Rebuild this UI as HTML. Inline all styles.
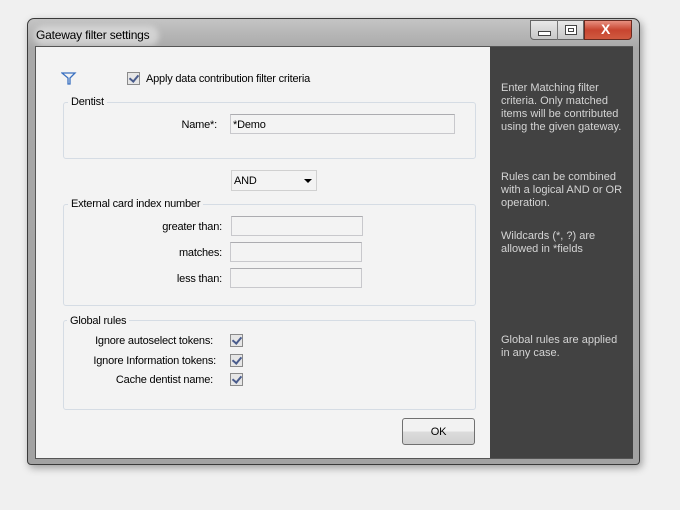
<!DOCTYPE html>
<html><head><style>
*{margin:0;padding:0;box-sizing:border-box}
body{width:680px;height:510px;background:#f0f0f0;position:relative;overflow:hidden;font-family:"Liberation Sans",sans-serif;font-size:11px;color:#000}
.a{position:absolute}
.t{font-size:11px;letter-spacing:-0.2px}
.win{left:27px;top:18px;width:613px;height:447px;border-radius:7px 7px 4px 4px;background:linear-gradient(#c4c4c4,#a8a8a8 30px,#a2a2a2);border:1px solid #3a3a3a;box-shadow:2px 3px 8px rgba(0,0,0,.35)}
.client{left:35px;top:46px;width:598px;height:413px;background:#f3f3f3;border:1px solid #555}
.dark{left:490px;top:47px;width:143px;height:411px;background:#424242}
.side{color:#d4d4d4;left:501px;line-height:13px}
.grp{border:1px solid #d5dce4;border-radius:3px}
.gl{background:#f3f3f3;padding:0 3px}
.inp{background:#f3f3f3;border:1px solid #c8c8cc;border-top-color:#acacb0}
.cb{width:13px;height:13px;border:1px solid #8a8a8a;background:#e6e6e6}
.cb:after{content:"";position:absolute;left:3px;top:0px;width:4px;height:7px;border:solid #4a5c8c;border-width:0 2px 2px 0;transform:rotate(40deg)}
.r{text-align:right}
</style></head><body>
<div class="a win"></div>
<div class="a" style="left:34px;top:26px;width:125px;height:20px;background:rgba(230,230,230,.6);border-radius:10px;filter:blur(3px)"></div>
<div class="a" style="left:36px;top:28px;font-size:12px;letter-spacing:-0.2px">Gateway filter settings</div>
<div class="a" style="left:530px;top:20px;width:54px;height:20px;border:1px solid #666;border-radius:0 0 0 4px;background:linear-gradient(#e8e8e8,#c8c8c8)"></div>
<div class="a" style="left:557px;top:20px;width:1px;height:20px;background:#777"></div>
<div class="a" style="left:538px;top:31px;width:13px;height:5px;border:1px solid #444;background:#fff"></div>
<div class="a" style="left:565px;top:25px;width:12px;height:10px;border:1px solid #444;background:#fff"></div>
<div class="a" style="left:568px;top:28px;width:6px;height:4px;border:1px solid #444"></div>
<div class="a" style="left:584px;top:20px;width:48px;height:20px;border:1px solid #6a2a20;border-radius:0 0 4px 0;background:linear-gradient(#e89080,#c84530 50%,#d05a40)"></div>
<div class="a" style="left:601px;top:21px;color:#fff;font-weight:bold;font-size:14px">X</div>
<div class="a client"></div>
<div class="a dark"></div>
<div class="a side" style="top:82px">Enter Matching filter<br>criteria. Only matched<br>items will be contributed<br>using the given gateway.</div>
<div class="a side" style="top:171px">Rules can be combined<br>with a logical AND or OR<br>operation.</div>
<div class="a side" style="top:230px">Wildcards (*, ?) are<br>allowed in *fields</div>
<div class="a side" style="top:334px">Global rules are applied<br>in any case.</div>

<svg class="a" style="left:61px;top:72px" width="16" height="14"><path d="M1 1H14L9 6V12H7V6Z" fill="none" stroke="#3a70c0" stroke-width="1.3"/></svg>
<div class="a cb" style="left:127px;top:72px"></div>
<div class="a t" style="left:146px;top:73px">Apply data contribution filter criteria</div>

<div class="a grp" style="left:63px;top:102px;width:413px;height:57px"></div>
<div class="a gl t" style="left:68px;top:96px">Dentist</div>
<div class="a r t" style="left:100px;top:119px;width:117px">Name*:</div>
<div class="a inp" style="left:230px;top:114px;width:225px;height:20px"></div>
<div class="a t" style="left:233px;top:119px">*Demo</div>

<div class="a inp" style="left:231px;top:170px;width:86px;height:21px;border-color:#d0d0d0"></div>
<div class="a t" style="left:234px;top:175px">AND</div>
<div class="a" style="left:304px;top:179px;width:0;height:0;border:4px solid transparent;border-top:4px solid #000;border-bottom:0"></div>

<div class="a grp" style="left:63px;top:204px;width:413px;height:102px"></div>
<div class="a gl t" style="left:68px;top:198px">External card index number</div>
<div class="a r t" style="left:100px;top:221px;width:122px">greater than:</div>
<div class="a r t" style="left:100px;top:247px;width:122px">matches:</div>
<div class="a r t" style="left:100px;top:273px;width:122px">less than:</div>
<div class="a inp" style="left:231px;top:216px;width:132px;height:20px"></div>
<div class="a inp" style="left:230px;top:242px;width:132px;height:20px"></div>
<div class="a inp" style="left:230px;top:268px;width:132px;height:20px"></div>

<div class="a grp" style="left:63px;top:320px;width:413px;height:90px"></div>
<div class="a gl t" style="left:67px;top:315px">Global rules</div>
<div class="a r t" style="left:60px;top:335px;width:153px">Ignore autoselect tokens:</div>
<div class="a r t" style="left:60px;top:355px;width:156px">Ignore Information tokens:</div>
<div class="a r t" style="left:60px;top:374px;width:153px">Cache dentist name:</div>
<div class="a cb" style="left:230px;top:334px"></div>
<div class="a cb" style="left:230px;top:354px"></div>
<div class="a cb" style="left:230px;top:373px"></div>

<div class="a" style="left:402px;top:418px;width:73px;height:27px;border:1px solid #707070;border-radius:3px;background:linear-gradient(#f2f2f2 50%,#dcdcdc 50%,#d0d0d0)"></div>
<div class="a t" style="left:402px;top:426px;width:73px;text-align:center">OK</div>
</body></html>
